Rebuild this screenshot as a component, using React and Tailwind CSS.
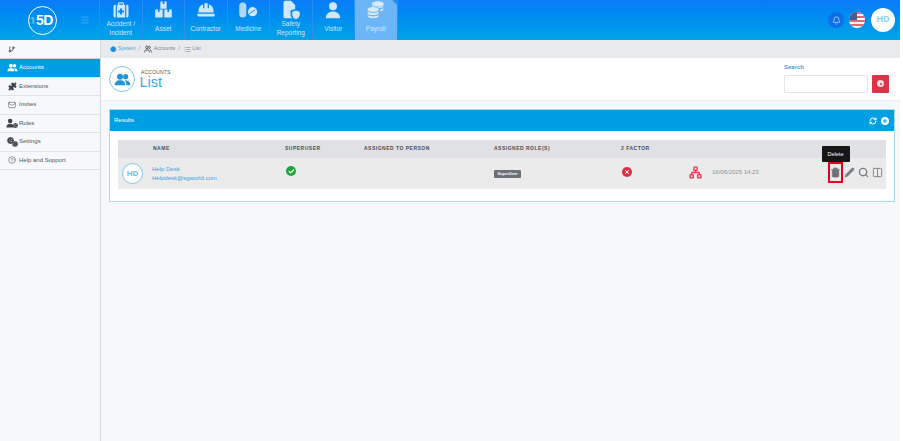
import React from "react";
import { Bell, RefreshCw, Plus, Pencil, Search, Columns2, Trash2, Check, X, Menu, GitBranch, Puzzle, Mail, Cog, HelpCircle, List, Hexagon, Network, Users } from "lucide-react";

const Ic = ({ children, className = "" }) => (
  <svg viewBox="0 0 24 24" fill="currentColor" className={className}>{children}</svg>
);

const PeopleIcon = ({ className }) => (
  <Ic className={className}>
    <circle cx="8.5" cy="8" r="4.2" />
    <circle cx="16.5" cy="8" r="3.6" />
    <path d="M1 20c0-4.5 3-7 7.500-7s7.500 2.500 7.500 7z" />
    <path d="M17.500 20h5.500c0-4-2.500-6.500-6-6.500-.7 0-1.300.1-1.900.2 1.600 1.400 2.400 3.500 2.400 6.300z" />
  </Ic>
);

const navIcons = {
  kit: (
    <Ic className="w-[18px] h-[18px]">
      <path d="M8 5V3.500C8 2.400 8.900 1.500 10 1.500h4c1.100 0 2 .9 2 2V5h-1.600V3.200H9.600V5z" />
      <path d="M2 7c0-1.100.9-2 2-2h1v17H4c-1.100 0-2-.9-2-2zM19 5h1c1.100 0 2 .9 2 2v13c0 1.100-.9 2-2 2h-1z" />
      <path fillRule="evenodd" d="M6.500 5h11v17h-11zM10.700 10v2.700H8v2.600h2.700V18h2.600v-2.700H16v-2.600h-2.700V10z" />
    </Ic>
  ),
  boxes: (
    <Ic className="w-[19px] h-[19px]">
      <path d="M8 2h3v3h2V2h3v9H8zM1.500 12H5v3h2v-3h4v10H1.500zM13 12h4v3h2v-3h3.500v10H13z" />
    </Ic>
  ),
  hat: (
    <Ic className="w-[20px] h-[20px]">
      <path d="M10 4h4v6h1.500V5.200C18.800 6.200 21 9.200 21 13v2H3v-2c0-3.800 2.200-6.800 5.500-7.800V10H10z" />
      <path d="M1.500 16.500h21v1.500c0 1-.8 1.800-1.800 1.800H3.300c-1 0-1.800-.8-1.800-1.800z" />
    </Ic>
  ),
  pills: (
    <Ic className="w-[20px] h-[20px]">
      <rect x="1.500" y="3" width="8.500" height="18" rx="4.250" fillOpacity="0.85" />
      <circle cx="17.500" cy="14" r="5.500" />
      <path d="M13.800 16.300l7-4.600" stroke="#1a8cf0" strokeWidth="1.200" />
    </Ic>
  ),
  doc: (
    <Ic className="w-[20px] h-[20px]">
      <path d="M3 3c0-1.100.9-2 2-2h7l5 5v5c-3 .3-4.500 1-5.500 1.700V17c0 2 .8 3.800 2 5H5c-1.100 0-2-.9-2-2z" />
      <path d="M18 12.500l4.500 1.700v3.300c0 2.800-2 4.700-4.500 5.500-2.500-.8-4.500-2.700-4.500-5.500v-3.300z" />
    </Ic>
  ),
  user: (
    <Ic className="w-[18px] h-[18px]">
      <circle cx="12" cy="7" r="5.300" />
      <path d="M2.500 23c0-6 4-9 9.500-9s9.500 3 9.500 9z" />
    </Ic>
  ),
  coins: (
    <Ic className="w-[19px] h-[19px]">
      <ellipse cx="15" cy="5" rx="7.500" ry="3.300" />
      <path d="M7.500 7v1.500c2.500-.3 7 0 9.500 1.500 2.500-.2 5-1 5-2.500V7c-1.500 1.200-4 1.700-7 1.700S9 8.200 7.500 7zM18 12v2.500c2-.3 4-1 4-2.500v-1.500c-1 .9-2.300 1.300-4 1.500z" />
      <ellipse cx="9" cy="12" rx="7" ry="3.200" />
      <path d="M2 14.500V16c0 1.700 3.200 3 7 3s7-1.300 7-3v-1.500c-1.500 1.200-4 1.800-7 1.800s-5.500-.6-7-1.800zM2 19v1c0 1.700 3.200 3 7 3s7-1.300 7-3v-1c-1.500 1.200-4 1.800-7 1.800S3.500 20.200 2 19z" />
    </Ic>
  ),
};

const navItems = [
  { label: ["Accident /", "Incident"], icon: navIcons.kit },
  { label: ["Asset"], icon: navIcons.boxes },
  { label: ["Contractor"], icon: navIcons.hat },
  { label: ["Medicine"], icon: navIcons.pills },
  { label: ["Safety", "Reporting"], icon: navIcons.doc },
  { label: ["Visitor"], icon: navIcons.user },
  { label: ["Payroll"], icon: navIcons.coins, active: true },
];

const TwoGears = () => (
  <span className="relative w-[11px] h-[10px] block">
    <Cog className="absolute left-0 top-0 w-[7px] h-[7px]" strokeWidth={4} />
    <Cog className="absolute right-0 bottom-0 w-[6px] h-[6px]" strokeWidth={4} />
  </span>
);

const RolesIcon = () => (
  <span className="relative w-[12px] h-[10px] block">
    <Ic className="absolute left-0 top-0 w-[10px] h-[10px]">
      <circle cx="10" cy="7" r="5.500" />
      <path d="M1 23c0-6 3.500-9 9-9s9 3 9 9z" />
    </Ic>
    <Cog className="absolute right-0 bottom-0 w-[5px] h-[5px]" strokeWidth={4} />
  </span>
);

const sideItems = [
  { label: "Accounts", icon: <PeopleIcon className="w-[11px] h-[11px]" />, active: true },
  { label: "Extensions", icon: <Puzzle className="w-[9px] h-[9px]" fill="#374151" strokeWidth={1} /> },
  { label: "Invites", icon: <Mail className="w-[8px] h-[8px]" strokeWidth={1.500} /> },
  { label: "Roles", icon: <RolesIcon /> },
  { label: "Settings", icon: <TwoGears /> },
  { label: "Help and Support", icon: <HelpCircle className="w-[8px] h-[8px]" strokeWidth={1.500} /> },
];

function Flag() {
  return (
    <div className="relative w-[16px] h-[16px] rounded-full overflow-hidden flex flex-col bg-white">
      {[0, 1, 2, 3].map((i) => (
        <div key={i} className="h-[2px] mb-[2px] bg-[#e06a72] shrink-0" />
      ))}
      <div className="absolute left-0 top-0 w-[8px] h-[8px] bg-[#4a5a90]" />
    </div>
  );
}

function Logo() {
  return (
    <div className="w-[29px] h-[29px] rounded-full border-[1.500px] border-white flex items-center justify-center text-white gap-[0.5px]">
      <span className="text-[3.500px] [writing-mode:vertical-rl] rotate-180 leading-none">isoft</span>
      <span className="text-[14px] font-bold leading-none tracking-[-0.5px]">5D</span>
    </div>
  );
}

export default function App() {
  const headCell = "text-[5px] font-bold tracking-[0.5px] text-[#4a4f55]";
  return (
    <div className="w-[900px] h-[441px] overflow-hidden flex flex-col bg-white font-['Liberation_Sans',Arial,sans-serif]">
      <header className="h-[40px] shrink-0 flex bg-gradient-to-b from-[#0a7bf8] to-[#00a3e6]">
        <div className="w-[100px] shrink-0 flex items-center pl-[28px] border-r border-[#2a8ef0]">
          <Logo />
          <Menu className="ml-[23px] w-[10px] h-[10px] text-[#5cb8f5]" strokeWidth={1.500} />
        </div>
        <nav className="flex">
          {navItems.map((n) => (
            <div
              key={n.label[0]}
              className={`relative w-[42.500px] flex flex-col items-center text-center border-r border-[#2a8ef0] ${
                n.active ? "bg-[#6cb6f7]" : ""
              }`}
            >
              <div className={`h-[19px] flex items-center justify-center ${n.active ? "text-[#d8ebfb]" : "text-[#cfe6fb]"}`}>{n.icon}</div>
              <div className="flex-1 flex flex-col justify-center pb-[3px] text-[6.500px] leading-[9px] text-[#cfe8fb]">
                {n.label.map((l) => (
                  <span key={l}>{l}</span>
                ))}
              </div>
              {n.active && <div className="absolute right-0 top-0 w-0 h-0 border-t-[5px] border-l-[5px] border-t-[#2a8ef0] border-l-transparent" />}
            </div>
          ))}
        </nav>
        <div className="ml-auto flex items-center pr-[5px]">
          <div className="w-[16px] h-[16px] rounded-full bg-[#0d6fe8] flex items-center justify-center mr-[5px]">
            <Bell className="w-[9px] h-[9px] text-[#b8dcfa]" strokeWidth={2} />
          </div>
          <Flag />
          <div className="w-[24px] h-[24px] rounded-full bg-white ml-[6px] flex items-center justify-center text-[9px] font-bold text-[#8fd0f2]">HD</div>
        </div>
      </header>

      <div className="flex-1 flex min-h-0">
        <aside className="w-[101px] shrink-0 bg-[#f7f8fb] border-r border-[#d5d8dc] flex flex-col">
          <div className="h-[19px] flex items-center pl-[8px] border-b border-[#cfd3d8] text-[#3a3f45]">
            <GitBranch className="w-[7px] h-[7px]" strokeWidth={2.500} />
          </div>
          {sideItems.map((s) => (
            <div
              key={s.label}
              className={`h-[18.500px] flex items-center border-b border-[#dfe2e6] text-[6px] ${
                s.active ? "bg-[#009fe3] text-white border-[#009fe3]" : "text-[#4f555c]"
              }`}
            >
              <span className={`w-[19px] flex justify-center pl-[5px] ${s.active ? "" : "text-[#3f454c]"}`}>{s.icon}</span>
              <span>{s.label}</span>
            </div>
          ))}
        </aside>

        <main className="flex-1 min-w-0 flex flex-col bg-[#f6f8fb]">
          <div className="h-[18px] shrink-0 bg-[#e8ebee] flex items-center pl-[9px] text-[5.200px] text-[#7d838a]">
            <Hexagon className="w-[6.500px] h-[6.500px] text-[#1a8fd8] mr-[1.500px]" fill="#1a8fd8" />
            <span className="text-[#3ba3dd]">System</span>
            <span className="mx-[3.500px]">/</span>
            <Users className="w-[8px] h-[8px] text-[#5a6068] mr-[2px]" strokeWidth={3} />
            <span>Accounts</span>
            <span className="mx-[3.500px]">/</span>
            <List className="w-[7px] h-[7px] mr-[2px]" />
            <span>List</span>
          </div>

          <div className="h-[43px] shrink-0 bg-white border-b border-[#eceef1] flex items-center pl-[8px] pr-[11px]">
            <div className="w-[26px] h-[26px] rounded-full border border-[#7cc8ee] flex items-center justify-center text-[#1f95d9]">
              <PeopleIcon className="w-[17px] h-[17px]" />
            </div>
            <div className="ml-[4.500px] flex flex-col">
              <span className="ml-[1.500px] text-[5px] tracking-[0.2px] leading-[6px] text-[#50555b]">ACCOUNTS</span>
              <span className="text-[14.500px] leading-[15px] text-[#3fa9e4]">List</span>
            </div>
            <div className="ml-auto flex flex-col mt-[-3px]">
              <span className="text-[6px] font-bold text-[#3ba3dd] leading-[8px] mb-[4px]">Search</span>
              <div className="flex gap-[4px]">
                <div className="w-[84px] h-[18px] bg-white border border-[#e5e7ea] rounded-[1px]" />
                <div className="w-[17px] h-[18px] bg-[#dc3349] flex items-center justify-center rounded-[1px]">
                  <div className="w-[7px] h-[7px] rounded-full bg-[#f7dfe2] flex items-center justify-center">
                    <div className="w-[2px] h-[2px] rounded-full bg-[#dc3349]" />
                  </div>
                </div>
              </div>
            </div>
          </div>

          <div className="pt-[8px] pl-[8px]">
            <section className="w-[786px] h-[93px] bg-white border border-[#a8dcf4] flex flex-col">
              <div className="h-[21px] shrink-0 bg-[#009fe3] flex items-center pl-[4px] pr-[5px] text-white">
                <span className="text-[6px]">Results</span>
                <div className="ml-auto flex items-center gap-[4px]">
                  <RefreshCw className="w-[8px] h-[8px]" strokeWidth={3} />
                  <div className="w-[8px] h-[8px] rounded-full bg-white flex items-center justify-center">
                    <Plus className="w-[6px] h-[6px] text-[#009fe3]" strokeWidth={4} />
                  </div>
                </div>
              </div>
              <div className="px-[8px] pt-[9px]">
                <div className="grid grid-cols-[35px_132px_79px_130px_127px_68px_156px_41px]">
                  <div className="h-[18px] bg-[#dfe1e4]" />
                  <div className={`h-[18px] bg-[#dfe1e4] flex items-center ${headCell}`}>NAME</div>
                  <div className={`h-[18px] bg-[#dfe1e4] flex items-center ${headCell}`}>SUPERUSER</div>
                  <div className={`h-[18px] bg-[#dfe1e4] flex items-center ${headCell}`}>ASSIGNED TO PERSON</div>
                  <div className={`h-[18px] bg-[#dfe1e4] flex items-center ${headCell}`}>ASSIGNED ROLE(S)</div>
                  <div className={`h-[18px] bg-[#dfe1e4] flex items-center ${headCell}`}>2 FACTOR</div>
                  <div className="h-[18px] bg-[#dfe1e4]" />
                  <div className="h-[18px] bg-[#dfe1e4]" />

                  <div className="h-[31px] bg-[#ebebeb] flex items-center pl-[4px]">
                    <div className="w-[21px] h-[21px] rounded-full bg-white border border-[#7cc8ee] flex items-center justify-center text-[8px] font-bold text-[#6cbcec]">HD</div>
                  </div>
                  <div className="h-[31px] bg-[#ebebeb] flex flex-col justify-center text-[6px] leading-[9px] text-[#3ba3dd] -ml-[1px]">
                    <span>Help Desk</span>
                    <span>Helpdesk@sgworld.com</span>
                  </div>
                  <div className="h-[31px] bg-[#ebebeb] flex items-center pb-[5px] pl-[1px]">
                    <div className="w-[10px] h-[10px] rounded-full bg-[#22a33f] flex items-center justify-center">
                      <Check className="w-[7px] h-[7px] text-white" strokeWidth={4} />
                    </div>
                  </div>
                  <div className="h-[31px] bg-[#ebebeb]" />
                  <div className="h-[31px] bg-[#ebebeb] flex items-center">
                    <span className="bg-[#6b7177] rounded-[1px] w-[27px] h-[8px] justify-center flex items-center leading-none text-[4px] font-bold text-white">SuperUser</span>
                  </div>
                  <div className="h-[31px] bg-[#ebebeb] flex items-center pb-[3px] pl-[1px]">
                    <div className="w-[10px] h-[10px] rounded-full bg-[#dc2f45] flex items-center justify-center">
                      <X className="w-[6px] h-[6px] text-white" strokeWidth={4} />
                    </div>
                  </div>
                  <div className="h-[31px] bg-[#ebebeb] flex items-center pb-[2px]">
                    <Network className="w-[13px] h-[13px] text-[#e23a4f]" strokeWidth={2.500} />
                    <span className="ml-[10px] text-[6px] text-[#8b9096]">16/06/2025 14:23</span>
                    <div className="relative ml-auto mr-[2px] w-[15px] h-[21px] border-2 border-[#e3001b] flex items-center justify-center text-[#6e7379]">
                      <Trash2 className="w-[11px] h-[13px]" fill="#6e7379" strokeWidth={1.500} />
                      <div className="absolute left-1/2 -translate-x-1/2 bottom-[19px] w-[28px] h-[16px] bg-[#161616] text-white text-[5.500px] flex items-center justify-center rounded-[1px]">Delete</div>
                    </div>
                  </div>
                  <div className="h-[31px] bg-[#ebebeb] flex items-center -ml-[1px] gap-[3px] pb-[2px] text-[#7a8086]">
                    <Pencil className="w-[11px] h-[11px]" fill="#7a8086" strokeWidth={1} />
                    <Search className="w-[11px] h-[11px]" strokeWidth={3} />
                    <Columns2 className="w-[11px] h-[11px]" strokeWidth={2} />
                  </div>
                </div>
              </div>
            </section>
          </div>
        </main>
      </div>
    </div>
  );
}
